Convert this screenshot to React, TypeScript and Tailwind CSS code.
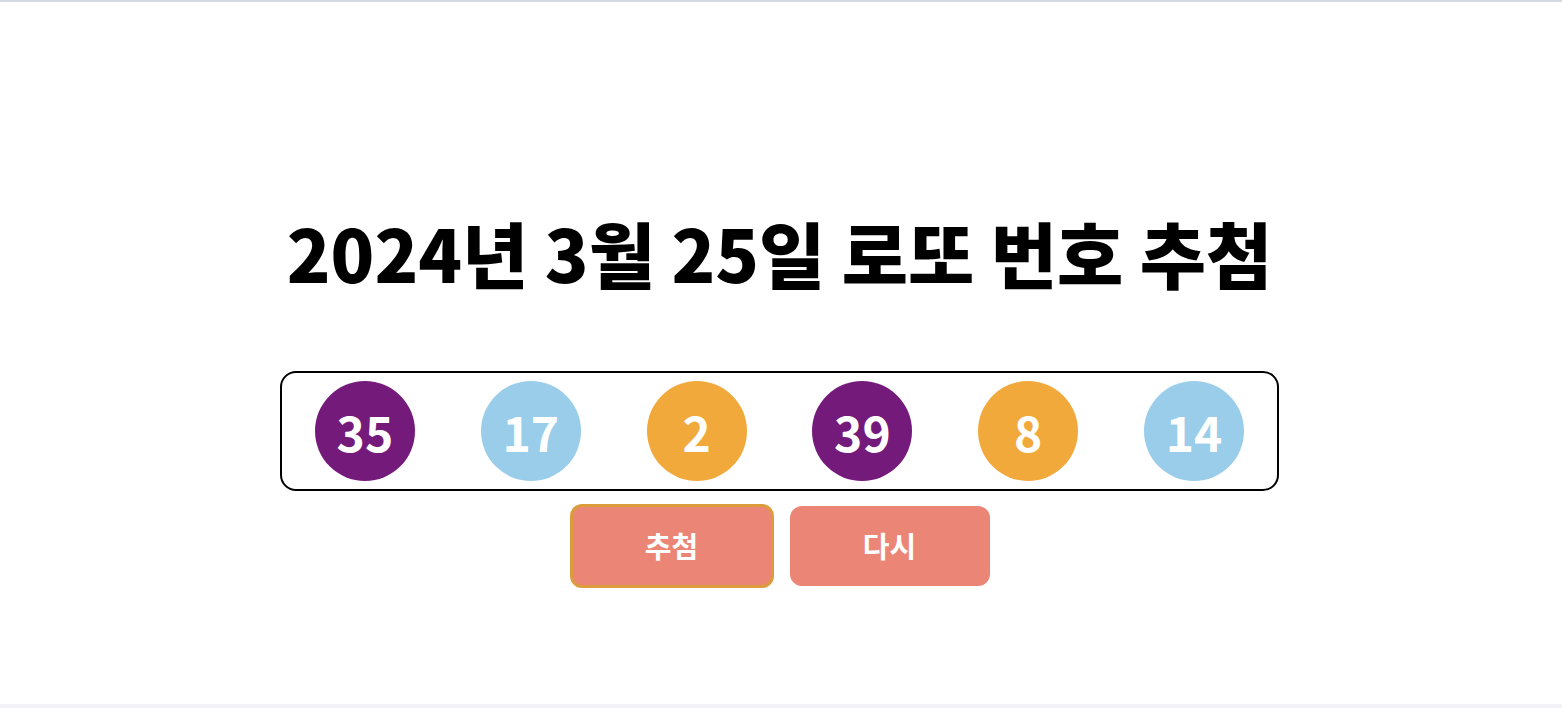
import React from "react"

const balls = [
  { n: 35, c: "bg-[#741a7a]" },
  { n: 17, c: "bg-[#99cdea]" },
  { n: 2, c: "bg-[#f2a93b]" },
  { n: 39, c: "bg-[#741a7a]" },
  { n: 8, c: "bg-[#f2a93b]" },
  { n: 14, c: "bg-[#99cdea]" },
]

export default function App() {
  return (
    <div
      className="h-[708px] w-full flex flex-col bg-white border-t-2 border-[#d6d8e4] overflow-hidden"
      style={{ fontFamily: '"Noto Sans CJK KR", "Noto Sans", sans-serif' }}
    >
      <main className="flex-1 flex flex-col items-center pr-[3px]">
        {/* Title */}
        <h1 className="mt-[200px] text-[72px] leading-[100px] font-black text-black">
          2024년 3월 25일 로또 번호 추첨
        </h1>

        {/* Balls */}
        <div className="mt-[69px] w-[999px] h-[120px] border-2 border-black rounded-[16px] flex items-center justify-around">
          {balls.map((b, i) => (
            <div
              key={i}
              className={`w-[100px] h-[100px] rounded-full ${b.c} flex items-center justify-center text-white text-[48px] font-bold`}
            >
              {b.n}
            </div>
          ))}
        </div>

        {/* Buttons */}
        <div className="mt-[13px] flex items-center gap-4">
          <button className="w-[204px] h-[84px] rounded-[12px] bg-[#eb8677] border-[3px] border-[#dd9c3c] text-white text-[29px] font-bold">
            추첨
          </button>
          <button className="w-[200px] h-[80px] rounded-[12px] bg-[#eb8677] text-white text-[29px] font-bold">
            다시
          </button>
        </div>
      </main>
      <div className="h-[4px] bg-[#f3f2f8]" />
    </div>
  )
}
